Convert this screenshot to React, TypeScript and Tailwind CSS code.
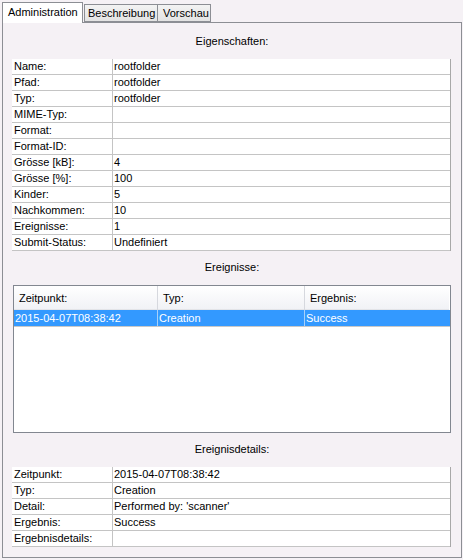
import React from "react";

const props: [string, string][] = [
  ["Name:", "rootfolder"],
  ["Pfad:", "rootfolder"],
  ["Typ:", "rootfolder"],
  ["MIME-Typ:", ""],
  ["Format:", ""],
  ["Format-ID:", ""],
  ["Grösse [kB]:", "4"],
  ["Grösse [%]:", "100"],
  ["Kinder:", "5"],
  ["Nachkommen:", "10"],
  ["Ereignisse:", "1"],
  ["Submit-Status:", "Undefiniert"],
];

const details: [string, string][] = [
  ["Zeitpunkt:", "2015-04-07T08:38:42"],
  ["Typ:", "Creation"],
  ["Detail:", "Performed by: 'scanner'"],
  ["Ergebnis:", "Success"],
  ["Ergebnisdetails:", ""],
];

function KV({ rows }: { rows: [string, string][] }) {
  return (
    <div className="ml-[9px] mr-[10px] bg-white border-r border-[#a8a8a8] flex flex-col">
      {rows.map(([k, v], i) => (
        <div key={i} className="flex h-[16px] border-b border-[#c4c4c4]">
          <div className="w-[101px] shrink-0 border-r border-[#c4c4c4] pl-[2px] leading-[15px] whitespace-nowrap">{k}</div>
          <div className="flex-1 pl-[1px] leading-[15px] whitespace-nowrap">{v}</div>
        </div>
      ))}
    </div>
  );
}

function Title({ children, pt }: { children: React.ReactNode; pt: string }) {
  return <div className={`text-center leading-[13px] ${pt}`}>{children}</div>;
}

export default function App() {
  return (
    <div className="w-[463px] h-[560px] bg-[#f5f1f5] font-['Liberation_Sans',Arial,sans-serif] text-[11px] text-black pl-[2px] pr-[1px] pt-[2px] pb-[2px] flex flex-col overflow-hidden">
      <div className="flex items-end h-[20px] relative z-10">
        <div className="w-[81px] h-[21px] -mb-px border border-b-0 border-[#8c8e94] bg-white pl-[5px] pt-[2px] leading-[14px]">
          Administration
        </div>
        <div className="w-[74px] h-[18px] ml-px border border-[#8c8e94] bg-gradient-to-b from-[#f3f3f3] to-[#e3e3e3] pl-[3px] pt-[2px] leading-[13px]">
          Beschreibung
        </div>
        <div className="w-[53px] h-[18px] border border-l-0 border-[#8c8e94] bg-gradient-to-b from-[#f3f3f3] to-[#e3e3e3] pl-[5px] pt-[2px] leading-[13px]">
          Vorschau
        </div>
      </div>
      <div className="flex-1 border border-[#8c8e94] bg-[#f5f1f5] flex flex-col">
        <div className="h-[36px]">
          <Title pt="pt-[12px]">Eigenschaften:</Title>
        </div>
        <KV rows={props} />
        <div className="h-[34px]">
          <Title pt="pt-[10px]">Ereignisse:</Title>
        </div>
        <div className="ml-[10px] mr-[10px] h-[148px] border border-[#828790] bg-white flex flex-col">
          <div className="grid grid-cols-[144px_147px_1fr] h-[24px] bg-gradient-to-b from-white to-[#f1f2f6] border-b border-[#e3e4e8] mr-px">
            <div className="border-r border-[#d6d8de] pl-[5px] leading-[24px]">Zeitpunkt:</div>
            <div className="border-r border-[#d6d8de] pl-[5px] leading-[24px]">Typ:</div>
            <div className="pl-[5px] leading-[24px]">Ergebnis:</div>
          </div>
          <div className="grid grid-cols-[144px_147px_1fr] h-[17px] bg-[#3399ff] text-white border-b border-[#c8c8c8]">
            <div className="border-r border-[#a8d0f8] pl-[1px] leading-[16px] whitespace-nowrap">2015-04-07T08:38:42</div>
            <div className="border-r border-[#a8d0f8] pl-px leading-[16px]">Creation</div>
            <div className="pl-px leading-[16px]">Success</div>
          </div>
        </div>
        <div className="h-[34px]">
          <Title pt="pt-[10px]">Ereignisdetails:</Title>
        </div>
        <KV rows={details} />
      </div>
    </div>
  );
}
